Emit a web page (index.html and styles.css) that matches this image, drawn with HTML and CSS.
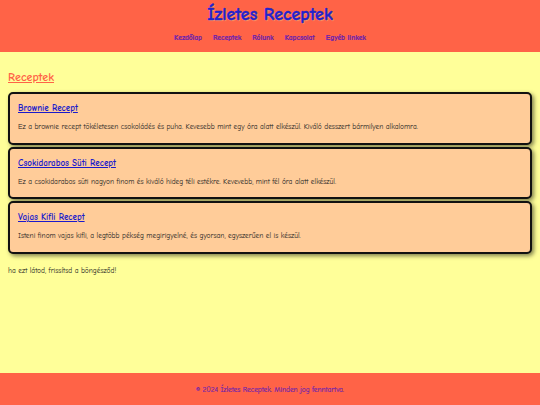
FILE: index.html
```html
<!DOCTYPE html>
<html lang="hu">
<head>
<meta charset="utf-8">
<title>Ízletes Receptek</title>
<link rel="stylesheet" href="styles.css">
</head>
<body>
<header class="site-header">
  <h1 class="site-title">Ízletes Receptek</h1>
  <nav class="site-nav">
    <a href="#">Kezdőlap</a>
    <a href="#">Receptek</a>
    <a href="#">Rólunk</a>
    <a href="#">Kapcsolat</a>
    <a href="#">Egyéb linkek</a>
  </nav>
</header>
<main class="content">
  <h2 class="section-title">Receptek</h2>
  <article class="card">
    <h3 class="card-title"><a href="#">Brownie Recept</a></h3>
    <p class="card-text">Ez a brownie recept tökéletesen csokoládés és puha. Kevesebb mint egy óra alatt elkészül. Kiváló desszert bármilyen alkalomra.</p>
  </article>
  <article class="card">
    <h3 class="card-title"><a href="#">Csokidarabos Süti Recept</a></h3>
    <p class="card-text">Ez a csokidarabos süti nagyon finom és kiváló hideg téli estékre. Kevevebb, mint fél óra alatt elkészül.</p>
  </article>
  <article class="card">
    <h3 class="card-title"><a href="#">Vajas Kifli Recept</a></h3>
    <p class="card-text">Isteni finom vajas kifli, a legtöbb pékség megirigyelné, és gyorsan, egyszerűen el is készül.</p>
  </article>
  <p class="note">ha ezt látod, frissítsd a böngésződ!</p>
</main>
<footer class="site-footer">
  <p>© 2024 Ízletes Receptek. Minden jog fenntartva.</p>
</footer>
</body>
</html>
```

FILE: styles.css
```css
html, body {
  margin: 0;
  padding: 0;
}
body {
  font-family: "Comic Sans MS", "Comic Neue", cursive, sans-serif;
  background: #ffff99;
  color: #222;
  min-height: 100vh;
  display: flex;
  flex-direction: column;
}
.site-header {
  background: #ff6347;
  height: 52px;
  box-sizing: border-box;
  padding-top: 4px;
  text-align: center;
}
.site-title {
  margin: 0;
  font-size: 18px;
  line-height: 22px;
  font-weight: bold;
  color: #2222cc;
  -webkit-text-stroke: 0.4px #2222cc;
  text-shadow: 1px 1px 1px #ff9966;
}
.site-nav {
  display: flex;
  justify-content: center;
  gap: 11px;
  margin-top: 7px;
}
.site-nav a {
  font-size: 7.4px;
  font-weight: bold;
  color: #6a1fb0;
  -webkit-text-stroke: 0.2px #6a1fb0;
  text-decoration: none;
}
.content {
  padding: 16px 8px 0;
}
.section-title {
  margin: 0 0 6px;
  font-size: 12px;
  line-height: 18px;
  color: #ff6347;
  text-decoration: underline;
  font-weight: bold;
}
.card {
  background: #ffcc99;
  border: 2px solid #111;
  border-radius: 5px;
  box-shadow: 2px 2px 4px rgba(0,0,0,0.5);
  padding: 7px 8px 5px;
  margin-bottom: 2px;
}
.card-title {
  margin: 0 0 7px;
  font-size: 9px;
  line-height: 14px;
}
.card-title a {
  color: #1a1acc;
}
.card-text {
  margin: 0 0 5.5px;
  font-size: 7.4px;
  line-height: 10px;
}
.note {
  margin: 12px 0 0;
  font-size: 7.4px;
  line-height: 10px;
}
.site-footer {
  margin-top: auto;
  background: #ff6347;
  height: 32px;
  display: flex;
  align-items: center;
  justify-content: center;
}
.site-footer p {
  margin: 0;
  font-size: 7.3px;
  color: #6a1fb0;
  -webkit-text-stroke: 0.15px #6a1fb0;
}
```
